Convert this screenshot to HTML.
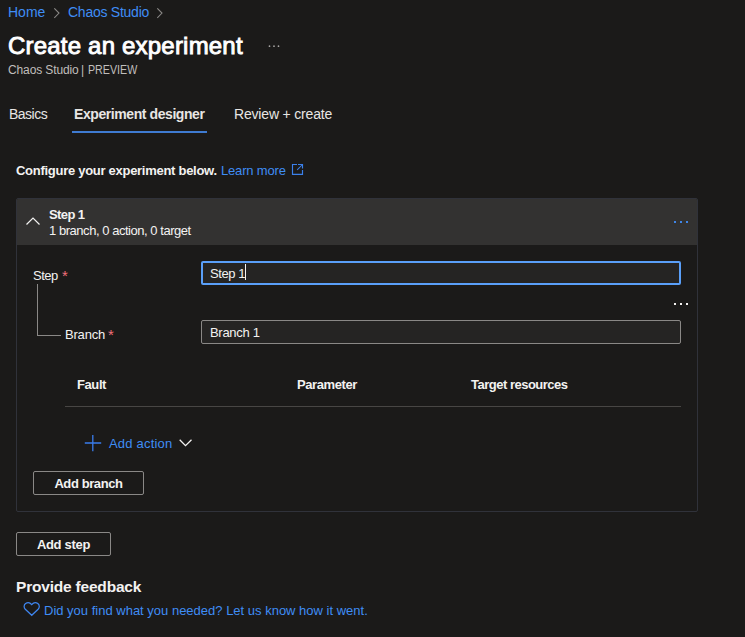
<!DOCTYPE html>
<html><head><meta charset="utf-8">
<style>
*{box-sizing:border-box;margin:0;padding:0}
html,body{width:745px;height:637px;overflow:hidden;background:#1b1a19;font-family:"Liberation Sans",sans-serif;color:#f3f2f1}
.abs{position:absolute;white-space:nowrap}
.link{color:#3f8df5}
.bc{font-size:14px;top:4px}
.chev{position:absolute}
.title{font-size:24px;font-weight:normal;-webkit-text-stroke:0.9px #fff;letter-spacing:0.2px;left:8px;top:32px;color:#fff}
.sub{font-size:12px;top:63px;letter-spacing:-0.3px;color:#c0bebc}
.tab{font-size:14px;top:106px;color:#e8e6e4}
.card{position:absolute;left:16px;top:198px;width:682px;height:314px;border:1px solid #30323a;border-radius:2px}
.chdr{position:absolute;left:17px;top:199px;width:680px;height:46px;background:#333231;border-radius:1px 1px 0 0}
.input{position:absolute;left:201px;width:480px;height:24px;background:#252423;border:1px solid #8a8886;border-radius:2px;font-size:13px;padding-left:8px;line-height:22px}
.btn{position:absolute;height:24px;border:1px solid #8a8886;border-radius:2px;font-size:13px;font-weight:bold;text-align:center;line-height:24px;color:#f3f2f1}
.lbl{font-size:13px}
.star{color:#f1707b}
.th{font-size:13px;font-weight:bold;top:377px}
</style></head><body>
<!-- breadcrumb -->
<div class="abs bc link" style="left:8px">Home</div>
<svg class="chev" style="left:53px;top:8px" width="8" height="12" viewBox="0 0 8 12"><path d="M1.3 0.3 L6 5.1 L1.3 9.8" fill="none" stroke="#8a8886" stroke-width="1.05"/></svg>
<div class="abs bc link" style="left:68px;letter-spacing:-0.25px">Chaos Studio</div>
<svg class="chev" style="left:156px;top:8px" width="8" height="12" viewBox="0 0 8 12"><path d="M1.3 0.3 L6 5.1 L1.3 9.8" fill="none" stroke="#8a8886" stroke-width="1.05"/></svg>

<div class="abs title">Create an experiment</div>
<svg class="chev" style="left:268px;top:45px" width="12" height="3"><circle cx="1.5" cy="1.2" r="0.85" fill="#a8a6a4"/><circle cx="6" cy="1.2" r="0.85" fill="#a8a6a4"/><circle cx="10.5" cy="1.2" r="0.85" fill="#a8a6a4"/></svg>
<div class="abs sub" style="left:8px;letter-spacing:-0.12px">Chaos Studio</div><div class="abs sub" style="left:81px">|</div><div class="abs sub" style="left:88px;letter-spacing:0;transform:scaleX(0.89);transform-origin:0 0">PREVIEW</div>

<!-- tabs -->
<div class="abs tab" style="left:9px;letter-spacing:-0.5px">Basics</div>
<div class="abs tab" style="left:74px;font-weight:bold;letter-spacing:-0.42px">Experiment designer</div>
<div style="position:absolute;left:72px;top:131px;width:135px;height:2px;background:#3f7bd1"></div>
<div class="abs tab" style="left:234px;letter-spacing:-0.18px">Review + create</div>

<div class="abs" style="left:16px;top:163px;font-size:13px;font-weight:bold;letter-spacing:-0.28px">Configure your experiment below.</div>
<div class="abs link" style="left:221px;top:163px;font-size:13px;letter-spacing:-0.17px">Learn more</div>
<svg class="chev" style="left:291px;top:163px" width="14" height="14" viewBox="0 0 14 14"><path d="M6 1.5H1.5V11.4H11.5V7 M7 1.5H11.5V5.5" fill="none" stroke="#3b80ea" stroke-width="1.15"/><path d="M6.2 6.8L11 2" stroke="#3b80ea" stroke-width="1.05"/></svg>

<!-- card -->
<div class="card"></div>
<div class="chdr"></div>
<svg class="chev" style="left:25px;top:216px" width="16" height="10" viewBox="0 0 16 10"><path d="M1.5 8.5 L8 2 L14.5 8.5" fill="none" stroke="#f3f2f1" stroke-width="1.2"/></svg>
<div class="abs" style="left:49px;top:207px;font-size:13px;font-weight:bold;letter-spacing:-0.6px">Step 1</div>
<div class="abs" style="left:49px;top:223px;font-size:13px;letter-spacing:-0.46px">1 branch, 0 action, 0 target</div>
<svg class="chev" style="left:673px;top:220px" width="18" height="4"><rect x="1" y="1" width="2" height="2" fill="#3f86e8"/><rect x="7" y="1" width="2" height="2" fill="#3f86e8"/><rect x="13" y="1" width="2" height="2" fill="#3f86e8"/></svg>

<div class="abs lbl" style="left:33px;top:268px;letter-spacing:-0.5px">Step</div><div class="abs star" style="left:62px;top:267px;font-size:15px">*</div>
<div class="input" style="top:261px;border:2px solid #5a9ff8;padding-left:7px;line-height:22px;letter-spacing:-0.4px">Step 1</div><div style="position:absolute;left:245px;top:264px;width:1px;height:16px;background:#f3f2f1"></div>
<svg class="chev" style="left:673px;top:302px" width="18" height="4"><rect x="1" y="1" width="2" height="2" fill="#f3f2f1"/><rect x="7" y="1" width="2" height="2" fill="#f3f2f1"/><rect x="13" y="1" width="2" height="2" fill="#f3f2f1"/></svg>
<div style="position:absolute;left:37px;top:284px;width:1px;height:51px;background:#8a8886"></div>
<div style="position:absolute;left:37px;top:335px;width:24px;height:1px;background:#8a8886"></div>
<div class="abs lbl" style="left:65px;top:327px;letter-spacing:-0.2px">Branch</div><div class="abs star" style="left:108px;top:326px;font-size:15px">*</div>
<div class="input" style="top:320px;letter-spacing:-0.3px;line-height:23px">Branch 1</div>

<div class="abs th" style="left:77px;letter-spacing:-0.4px">Fault</div>
<div class="abs th" style="left:297px;letter-spacing:-0.4px">Parameter</div>
<div class="abs th" style="left:471px;letter-spacing:-0.5px">Target resources</div>
<div style="position:absolute;left:65px;top:406px;width:616px;height:1px;background:#484644"></div>

<svg class="chev" style="left:84px;top:434px" width="18" height="18" viewBox="0 0 18 18"><path d="M8.8 1v16.2 M0.8 9h16.4" stroke="#3a7ceb" stroke-width="1.3"/></svg>
<div class="abs link" style="left:109px;top:436px;font-size:13px;letter-spacing:0.2px">Add action</div>
<svg class="chev" style="left:179px;top:439px" width="14" height="9" viewBox="0 0 14 9"><path d="M0.7 0.8 L6.5 6.7 L12.5 0.8" fill="none" stroke="#f3f2f1" stroke-width="1.3"/></svg>

<div class="btn" style="left:33px;top:471px;width:111px;letter-spacing:-0.4px">Add branch</div>
<div class="btn" style="left:16px;top:532px;width:95px;letter-spacing:-0.3px">Add step</div>

<div class="abs" style="left:16px;top:578px;font-size:15.5px;font-weight:bold;letter-spacing:-0.2px">Provide feedback</div>
<svg class="chev" style="left:23px;top:601px" width="18" height="16" viewBox="0 0 18 16"><path d="M8.7 14.3 L2.3 8.2 C0.6 6.5 0.8 3.8 2.6 2.5 C4.4 1.2 7 1.5 8.7 3.6 C10.4 1.5 13 1.2 14.8 2.5 C16.6 3.8 16.8 6.5 15.1 8.2 Z" fill="none" stroke="#3f86f0" stroke-width="1.25"/></svg>
<div class="abs link" style="left:44px;top:603px;font-size:13px">Did you find what you needed? Let us know how it went.</div>
</body></html>
